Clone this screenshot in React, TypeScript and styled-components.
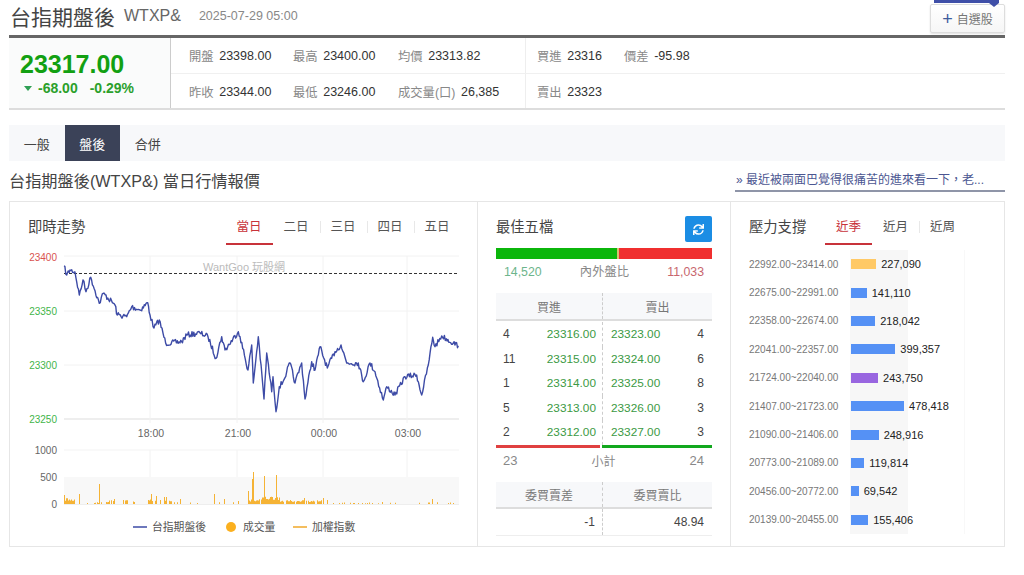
import React from 'react';
import styled, { createGlobalStyle } from 'styled-components';
import { FaSync } from 'react-icons/fa';

const Global = createGlobalStyle`
  html, body { margin: 0; padding: 0; background: #fff; overflow: hidden; }
  body { font-family: "Liberation Sans", "Noto Sans CJK TC", sans-serif; color: #444; }
  * { box-sizing: border-box; }
`;

const Page = styled.div`
  width: 1024px;
  height: 575px;
  padding: 0 19px 0 9px;
  overflow: hidden;
`;

const Header = styled.header`
  height: 35px;
  display: flex;
  justify-content: space-between;
  padding-left: 1px;
`;
const TitleGroup = styled.div`
  display: flex;
  align-items: center;
  height: 34px;
  padding-bottom: 2px;
`;
const Title = styled.h1`
  margin: 0;
  font-size: 21px;
  font-weight: 400;
  color: #444;
`;
const Symbol = styled.span`
  margin-left: 9px;
  font-size: 16px;
  color: #666;
`;
const DateText = styled.span`
  margin-left: 18px;
  font-size: 12.5px;
  color: #888;
`;
const WatchButton = styled.button`
  position: relative;
  width: 75px;
  height: 29px;
  margin-top: 4px;
  border: 1px solid #ddd;
  border-radius: 2px;
  background: linear-gradient(#fff, #f6f6f6);
  box-shadow: 0 1px 2px rgba(0, 0, 0, 0.12);
  font: 12px "Liberation Sans", "Noto Sans CJK TC", sans-serif;
  color: #777;
  padding: 0;
`;
const Plus = styled.span`
  font-size: 18px;
  line-height: 16px;
  vertical-align: -1px;
  color: #3f5d9c;
  margin-right: 4px;
`;
const Ribbon = styled.span`
  position: absolute;
  top: -5px;
  left: 3px;
  width: 65px;
  height: 3px;
  background: #3f4fa8;
  &::after {
    content: '';
    position: absolute;
    right: 0;
    top: 3px;
    border-style: solid;
    border-width: 4px 5px 0 5px;
    border-color: #3f4fa8 transparent transparent transparent;
  }
`;

const QuoteBox = styled.section`
  display: flex;
  height: 75px;
  border-top: 3px solid #666;
  border-bottom: 2px solid #ddd;
`;
const PriceCell = styled.div`
  width: 162px;
  background: #fafbfb;
  border-right: 1px solid #ccc;
  padding: 12px 0 0 11px;
`;
const BigPrice = styled.div`
  font-size: 25px;
  line-height: 28px;
  font-weight: 700;
  color: #12a012;
`;
const ChangeRow = styled.div`
  display: flex;
  align-items: center;
  margin-top: 1px;
  padding-left: 4px;
  font-size: 14px;
  line-height: 18px;
  font-weight: 700;
  color: #2ba02b;
`;
const DownArrow = styled.i`
  width: 0;
  height: 0;
  margin: 1px 6px 0 0;
  border-style: solid;
  border-width: 5px 4px 0 4px;
  border-color: #2f9f55 transparent transparent transparent;
`;
const Percent = styled.span`
  margin-left: 12px;
`;
const QuoteRows = styled.div`
  flex: 1;
  display: flex;
  flex-direction: column;
`;
const QuoteRow = styled.div`
  flex: 1;
  display: grid;
  grid-template-columns: 104px 105px 127px 99px 1fr;
  padding-left: 18px;
  & + & {
    border-top: 1px solid #f0f0f0;
  }
`;
const QuoteItem = styled.div<{ $split?: boolean }>`
  display: flex;
  align-items: center;
  gap: 5.6px;
  padding-top: 2px;
  ${(p) => (p.$split ? 'border-left: 1px solid #eee; padding-left: 11px;' : '')}
`;
const QuoteLabel = styled.span`
  font-size: 12.3px;
  color: #888;
`;
const QuoteValue = styled.span`
  font-size: 12.5px;
  color: #333;
`;

const TabBar = styled.nav`
  display: flex;
  height: 36px;
  margin-top: 15px;
  background: #f7f8fa;
`;
const PageTab = styled.a<{ $active?: boolean }>`
  width: 55.5px;
  display: flex;
  align-items: center;
  justify-content: center;
  font-size: 13px;
  color: ${(p) => (p.$active ? '#fff' : '#444')};
  background: ${(p) => (p.$active ? '#3b4258' : 'transparent')};
`;

const HeadingRow = styled.div`
  height: 40px;
  display: flex;
  justify-content: space-between;
`;
const Heading = styled.h2`
  margin: 9px 0 0;
  font-size: 16.2px;
  line-height: 22px;
  font-weight: 400;
  color: #444;
`;
const NewsLink = styled.a`
  width: 270px;
  height: 22px;
  margin-top: 9px;
  padding-left: 1px;
  font-size: 12px;
  line-height: 20px;
  color: #4b5691;
  border-bottom: 2px solid #8f95a8;
  white-space: nowrap;
`;

const Panels = styled.section`
  display: grid;
  grid-template-columns: 467px 253px 1fr;
  height: 346px;
  border: 1px solid #e6e6e6;
`;
const Panel = styled.div`
  min-width: 0;
  & + & {
    border-left: 1px solid #e6e6e6;
  }
`;
const PanelHead = styled.div<{ $pad: number }>`
  height: 44px;
  display: flex;
  padding: 14px 0 0 ${(p) => p.$pad}px;
`;
const PanelTitle = styled.h3<{ $w?: number }>`
  margin: 0;
  width: ${(p) => (p.$w ? `${p.$w}px` : 'auto')};
  font-size: 14.3px;
  line-height: 22px;
  font-weight: 400;
  color: #444;
`;
const RangeTabs = styled.div`
  display: flex;
`;
const RangeTab = styled.a<{ $active?: boolean }>`
  position: relative;
  width: 47px;
  height: 29px;
  padding-top: 2px;
  font-size: 12.5px;
  line-height: 18px;
  text-align: center;
  color: ${(p) => (p.$active ? '#c8323a' : '#555')};
  border-bottom: 2px solid ${(p) => (p.$active ? '#c8323a' : 'transparent')};
  & + &::before {
    content: '';
    position: absolute;
    left: 0;
    top: 5px;
    height: 12px;
    border-left: 1px solid #e8e8e8;
  }
`;
const ChartSvg = styled.svg`
  display: block;
  width: 467px;
  height: 300px;
`;

const BestBody = styled.div`
  padding: 0 18px;
`;
const BestHead = styled.div`
  height: 46px;
  display: flex;
  justify-content: space-between;
  padding-top: 14px;
`;
const RefreshButton = styled.button`
  width: 27px;
  height: 26px;
  border: 0;
  border-radius: 2px;
  background: #1b8de4;
  color: #fff;
  display: flex;
  align-items: center;
  justify-content: center;
  padding: 0;
`;
const RatioBar = styled.div`
  display: flex;
  gap: 2px;
  height: 11px;
  background: #d8c070;
`;
const RatioPart = styled.div<{ $color: string; $w: number }>`
  width: ${(p) => p.$w}px;
  background: ${(p) => p.$color};
`;
const RatioText = styled.div`
  display: flex;
  justify-content: space-between;
  height: 34px;
  padding: 5px 8px 0;
  font-size: 12.3px;
  line-height: 17px;
  color: #888;
`;
const BuySum = styled.span`
  color: #6db58c;
`;
const SellSum = styled.span`
  color: #c8666e;
`;
const TwoCols = styled.div`
  display: grid;
  grid-template-columns: 107px 1fr;
`;
const HeadRow = styled(TwoCols)`
  height: 28px;
  background: #f7f8fa;
  border-bottom: 2px solid #ddd;
`;
const HeadCell = styled.div<{ $split?: boolean }>`
  display: flex;
  align-items: center;
  justify-content: center;
  font-size: 12px;
  color: #777;
  ${(p) => (p.$split ? 'border-right: 1px dashed #ccc;' : '')}
`;
const DepthList = styled.div`
  padding-top: 1px;
`;
const DepthRow = styled(TwoCols)`
  height: 24.5px;
`;
const DepthSide = styled.div<{ $left?: boolean }>`
  display: flex;
  align-items: center;
  justify-content: space-between;
  font-size: 11.8px;
  padding: ${(p) => (p.$left ? '0 6px 0 7px' : '0 8px')};
  ${(p) => (p.$left ? 'border-right: 1px dashed #ccc;' : '')}
`;
const Qty = styled.span`
  font-size: 12px;
  color: #444;
`;
const DepthPrice = styled.span`
  color: #3c9a44;
`;
const SplitLine = styled.div`
  display: flex;
  gap: 2px;
  height: 3px;
`;
const SplitPart = styled.div<{ $color: string; $w: string }>`
  flex: ${(p) => p.$w};
  background: ${(p) => p.$color};
`;
const SubtotalRow = styled.div`
  display: flex;
  justify-content: space-between;
  align-items: center;
  height: 34px;
  padding: 0 8px 8px 7px;
  font-size: 13px;
  color: #888;
`;
const SubLabel = styled.span`
  font-size: 12px;
`;
const ValueRow = styled(TwoCols)`
  height: 27px;
  border-bottom: 1px solid #eee;
`;
const ValueCell = styled.div<{ $split?: boolean }>`
  display: flex;
  align-items: center;
  justify-content: flex-end;
  padding-right: ${(p) => (p.$split ? 7 : 8)}px;
  font-size: 12px;
  color: #444;
  ${(p) => (p.$split ? 'border-right: 1px dashed #ccc;' : '')}
`;
const SubHead = styled(HeadRow)`
  height: 27px;
`;

const PressureList = styled.div`
  margin: 4px 0 0 18px;
  height: 284px;
  background:
    linear-gradient(#f7f7f7, #f7f7f7) no-repeat 101px 0 / 58px 100%,
    linear-gradient(#f8f8f8, #f8f8f8) no-repeat 215px 0 / 1px 100%;
`;
const PressureRow = styled.div`
  height: 28.4px;
  display: flex;
  align-items: center;
`;
const RangeLabel = styled.span`
  width: 102px;
  font-size: 10px;
  color: #777;
  white-space: nowrap;
`;
const VolBar = styled.i<{ $color: string }>`
  height: 10px;
  background: ${(p) => p.$color};
`;
const VolValue = styled.span`
  margin-left: 5px;
  font-size: 11px;
  color: #222;
`;

const keyPts: [number, number][] = [
  [64, 266], [66.7, 275], [70, 270], [75, 272], [79.3, 295], [83, 280], [86, 291.7], [90.7, 277.3], [99.3, 303.3],
  [103.3, 293.3], [115, 305], [117.3, 315], [126.7, 316.7], [131.7, 306.7], [140, 310], [147.7, 302.7], [150, 315],
  [154, 328], [159.3, 320], [165.7, 343.3], [181.7, 341.7], [186.7, 335], [200, 333], [208, 336.7], [216, 358.3],
  [221.7, 336.7], [225, 350], [238.3, 331.7], [240, 336.7], [248, 370], [251.7, 345], [253.3, 383], [258.3, 336.7],
  [264, 399], [266.7, 353], [271.7, 391.7], [273, 376.7], [276, 411.7], [279.3, 386.7], [283, 381.7], [286.7, 371.7],
  [290, 363], [295, 383], [301.7, 363], [305, 399], [311.7, 361.7], [315, 370], [320, 346.7], [327.3, 368], [335, 351.7],
  [341, 345], [346.7, 363], [358.3, 363], [363.3, 381.7], [370, 363], [375, 371.7], [383.3, 400], [386.7, 386.7],
  [395, 395], [405, 376.7], [416.7, 375], [421.7, 395], [428.3, 365], [432.7, 337.3], [435, 346.7], [441.7, 336],
  [453.3, 343], [458.3, 345.7],
];

let seed = 7;
const rnd = () => {
  seed = (seed * 16807) % 2147483647;
  return seed / 2147483647;
};

const linePoints = (() => {
  const out: string[] = [];
  for (let i = 0; i < keyPts.length - 1; i++) {
    const [x0, y0] = keyPts[i];
    const [x1, y1] = keyPts[i + 1];
    const n = Math.max(1, Math.round((x1 - x0) / 0.9));
    for (let k = 0; k < n; k++) {
      const t = k / n;
      const j = k === 0 ? 0 : (rnd() - 0.5) * 5.5;
      out.push(`${(x0 + (x1 - x0) * t).toFixed(1)},${(y0 + (y1 - y0) * t + j).toFixed(1)}`);
    }
  }
  out.push('458.3,345.7');
  return out.join(' ');
})();

const volRegions: [number, number, number, number][] = [
  [64, 75, 0.9, 6], [75, 108, 0.25, 2], [108, 140, 0.45, 4], [147, 172, 0.55, 5], [172, 200, 0.15, 2], [207, 240, 0.15, 2],
  [248, 262, 0.9, 5], [262, 280, 1, 8], [280, 300, 0.85, 4], [300, 330, 0.7, 4], [330, 380, 0.2, 1.5], [380, 459, 0.06, 2],
];
const volSpikes: [number, number][] = [
  [64, 9], [79, 10], [99, 20], [114, 5], [123, 4], [151, 10], [156, 8], [164, 7], [166, 7], [180, 5], [214, 10], [224, 5],
  [238, 3], [248, 13], [252, 25], [253, 32], [264, 28], [276, 29], [304, 6], [323, 6], [432, 5],
];
const volPath = (() => {
  let d = '';
  const bar = (x: number, h: number) => {
    d += `M${x} 504h1v${-h}h-1z`;
  };
  volRegions.forEach(([a, b, p, m]) => {
    for (let x = a; x < b; x++) if (rnd() < p) bar(x, m * (0.5 + 0.5 * rnd()));
  });
  volSpikes.forEach(([x, h]) => bar(x, h));
  return d;
})();

const priceGrid = [
  { y: 257, label: '23400', color: '#d9534f' },
  { y: 311, label: '23350', color: '#3fb54a' },
  { y: 365, label: '23300', color: '#3fb54a' },
  { y: 419, label: '23250', color: '#3fb54a' },
];
const timeGrid = [
  { x: 150, label: '18:00' },
  { x: 237, label: '21:00' },
  { x: 323, label: '00:00' },
  { x: 407, label: '03:00' },
];

const Chart = () => (
  <ChartSvg viewBox="10 246 467 300" fontFamily='"Liberation Sans", "Noto Sans CJK TC", sans-serif'>
    {priceGrid.map((g, i) => (
      <line key={g.y} x1="64" x2="459" y1={g.y - (i === 0 ? 1 : 0)} y2={g.y - (i === 0 ? 1 : 0)} stroke={i === 3 ? '#ddd' : '#f2f2f2'} />
    ))}
    {timeGrid.map((g) => (
      <g key={g.x}>
        <line x1={g.x} x2={g.x} y1="256" y2="423" stroke="#f2f2f2" />
        <line x1={g.x} x2={g.x} y1="450" y2="504" stroke="#f2f2f2" />
        <text x={g.x + 1} y="437" fontSize="10.5" fill="#666" textAnchor="middle">{g.label}</text>
      </g>
    ))}
    {priceGrid.map((g) => (
      <text key={g.label} x="57" y={g.y + 4} fontSize="10" fill={g.color} textAnchor="end">{g.label}</text>
    ))}
    <text x="203" y="271" fontSize="11" fill="#bbb">WantGoo 玩股網</text>
    <line x1="64" x2="459" y1="273.5" y2="273.5" stroke="#333" strokeDasharray="3 2" />
    <polyline points={linePoints} fill="none" stroke="#3d4ba6" strokeWidth="1.4" strokeLinejoin="round" />

    <rect x="64" y="477" width="395" height="27" fill="#f8f8f8" />
    <line x1="64" x2="459" y1="450" y2="450" stroke="#f3f3f3" />
    <line x1="64" x2="459" y1="504.5" y2="504.5" stroke="#eee" />
    <path d={volPath} fill="#f5b335" />
    <text x="57" y="454" fontSize="10" fill="#666" textAnchor="end">1000</text>
    <text x="57" y="481" fontSize="10" fill="#666" textAnchor="end">500</text>
    <text x="57" y="508" fontSize="10" fill="#666" textAnchor="end">0</text>

    <line x1="133" x2="147" y1="527" y2="527" stroke="#3d4ba6" strokeWidth="1.5" />
    <text x="152" y="531" fontSize="10.8" fill="#555">台指期盤後</text>
    <circle cx="231" cy="527" r="5" fill="#fbb01f" />
    <text x="243" y="531" fontSize="10.8" fill="#555">成交量</text>
    <line x1="293" x2="307" y1="527" y2="527" stroke="#f0a92a" strokeWidth="1.5" />
    <text x="312" y="531" fontSize="10.8" fill="#555">加權指數</text>
  </ChartSvg>
);

const depth = [
  [4, '23316.00', '23323.00', 4],
  [11, '23315.00', '23324.00', 6],
  [1, '23314.00', '23325.00', 8],
  [5, '23313.00', '23326.00', 3],
  [2, '23312.00', '23327.00', 3],
];

const pressure: [string, number, string][] = [
  ['22992.00~23414.00', 227090, '#ffc966'],
  ['22675.00~22991.00', 141110, '#5591f5'],
  ['22358.00~22674.00', 218042, '#5591f5'],
  ['22041.00~22357.00', 399357, '#5591f5'],
  ['21724.00~22040.00', 243750, '#9966e0'],
  ['21407.00~21723.00', 478418, '#5591f5'],
  ['21090.00~21406.00', 248916, '#5591f5'],
  ['20773.00~21089.00', 119814, '#5591f5'],
  ['20456.00~20772.00', 69542, '#5591f5'],
  ['20139.00~20455.00', 155406, '#5591f5'],
];

const quoteTop = [
  ['開盤', '23398.00'],
  ['最高', '23400.00'],
  ['均價', '23313.82'],
  ['買進', '23316'],
  ['價差', '-95.98'],
];
const quoteBottom = [
  ['昨收', '23344.00'],
  ['最低', '23246.00'],
  ['成交量(口)', '26,385'],
  ['賣出', '23323'],
];

const QuoteLine = ({ items }: { items: string[][] }) => (
  <QuoteRow>
    {items.map(([l, v], i) => (
      <QuoteItem key={l} $split={i === 3}>
        <QuoteLabel>{l}</QuoteLabel>
        <QuoteValue>{v}</QuoteValue>
      </QuoteItem>
    ))}
  </QuoteRow>
);

export default function App() {
  return (
    <Page>
      <Global />
      <Header>
        <TitleGroup>
          <Title>台指期盤後</Title>
          <Symbol>WTXP&amp;</Symbol>
          <DateText>2025-07-29 05:00</DateText>
        </TitleGroup>
        <WatchButton>
          <Ribbon />
          <Plus>+</Plus>自選股
        </WatchButton>
      </Header>

      <QuoteBox>
        <PriceCell>
          <BigPrice>23317.00</BigPrice>
          <ChangeRow>
            <DownArrow />
            -68.00
            <Percent>-0.29%</Percent>
          </ChangeRow>
        </PriceCell>
        <QuoteRows>
          <QuoteLine items={quoteTop} />
          <QuoteLine items={quoteBottom} />
        </QuoteRows>
      </QuoteBox>

      <TabBar>
        <PageTab>一般</PageTab>
        <PageTab $active>盤後</PageTab>
        <PageTab>合併</PageTab>
      </TabBar>

      <HeadingRow>
        <Heading>台指期盤後(WTXP&amp;) 當日行情報價</Heading>
        <NewsLink>» 最近被兩面巴覺得很痛苦的進來看一下，老...</NewsLink>
      </HeadingRow>

      <Panels>
        <Panel>
          <PanelHead $pad={18}>
            <PanelTitle $w={197.5}>即時走勢</PanelTitle>
            <RangeTabs>
              <RangeTab $active>當日</RangeTab>
              <RangeTab>二日</RangeTab>
              <RangeTab>三日</RangeTab>
              <RangeTab>四日</RangeTab>
              <RangeTab>五日</RangeTab>
            </RangeTabs>
          </PanelHead>
          <Chart />
        </Panel>

        <Panel>
          <BestBody>
            <BestHead>
              <PanelTitle>最佳五檔</PanelTitle>
              <RefreshButton aria-label="refresh">
                <FaSync size={11} />
              </RefreshButton>
            </BestHead>
            <RatioBar>
              <RatioPart $color="#0bb60b" $w={121} />
              <RatioPart $color="#f02f2f" $w={93} />
            </RatioBar>
            <RatioText>
              <BuySum>14,520</BuySum>
              <span>內外盤比</span>
              <SellSum>11,033</SellSum>
            </RatioText>
            <HeadRow>
              <HeadCell $split>買進</HeadCell>
              <HeadCell>賣出</HeadCell>
            </HeadRow>
            <DepthList>
              {depth.map((r) => (
                <DepthRow key={String(r[1])}>
                  <DepthSide $left>
                    <Qty>{r[0]}</Qty>
                    <DepthPrice>{r[1]}</DepthPrice>
                  </DepthSide>
                  <DepthSide>
                    <DepthPrice>{r[2]}</DepthPrice>
                    <Qty>{r[3]}</Qty>
                  </DepthSide>
                </DepthRow>
              ))}
            </DepthList>
            <SplitLine>
              <SplitPart $color="#e04040" $w="104" />
              <SplitPart $color="#12a81e" $w="110" />
            </SplitLine>
            <SubtotalRow>
              <span>23</span>
              <SubLabel>小計</SubLabel>
              <span>24</span>
            </SubtotalRow>
            <SubHead>
              <HeadCell $split>委買賣差</HeadCell>
              <HeadCell>委買賣比</HeadCell>
            </SubHead>
            <ValueRow>
              <ValueCell $split>-1</ValueCell>
              <ValueCell>48.94</ValueCell>
            </ValueRow>
          </BestBody>
        </Panel>

        <Panel>
          <PanelHead $pad={18}>
            <PanelTitle $w={76}>壓力支撐</PanelTitle>
            <RangeTabs>
              <RangeTab $active>近季</RangeTab>
              <RangeTab>近月</RangeTab>
              <RangeTab>近周</RangeTab>
            </RangeTabs>
          </PanelHead>
          <PressureList>
            {pressure.map(([range, v, color]) => (
              <PressureRow key={range}>
                <RangeLabel>{range}</RangeLabel>
                <VolBar $color={color} style={{ width: v * 0.000111 }} />
                <VolValue>{v.toLocaleString('en-US')}</VolValue>
              </PressureRow>
            ))}
          </PressureList>
        </Panel>
      </Panels>
    </Page>
  );
}
